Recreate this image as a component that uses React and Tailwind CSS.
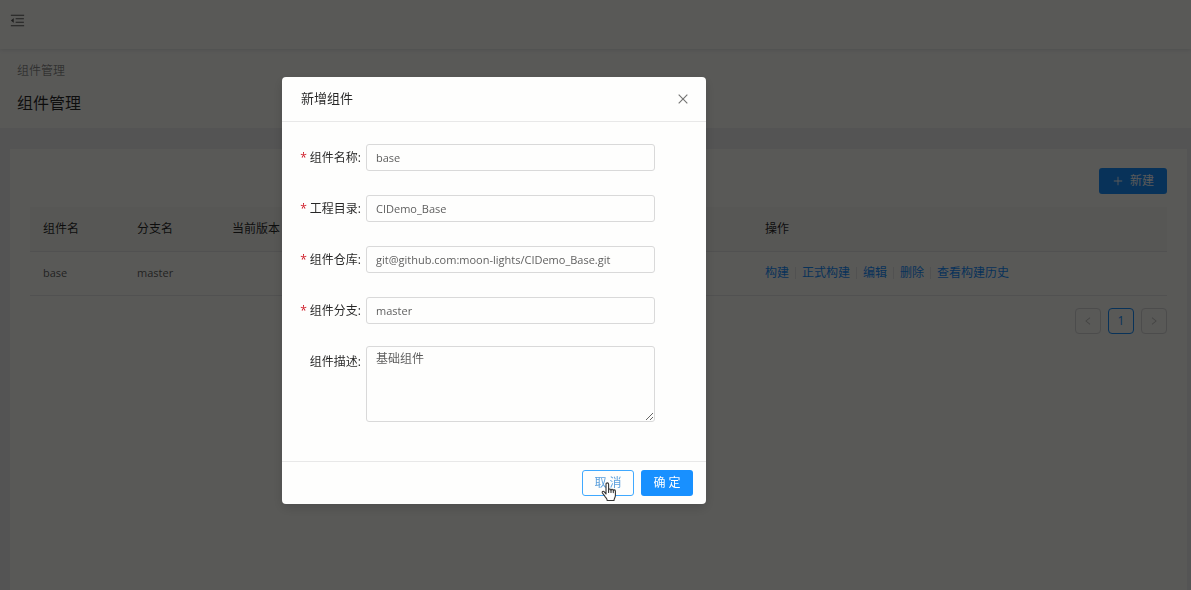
import React, { useState } from "react";
import {
  AiOutlineMenuFold,
  AiOutlineClose,
  AiOutlinePlus,
  AiOutlineLeft,
  AiOutlineRight,
} from "react-icons/ai";

const fields = [
  { name: "name", label: "组件名称" },
  { name: "dir", label: "工程目录" },
  { name: "repo", label: "组件仓库" },
  { name: "branch", label: "组件分支" },
];

const actions = ["构建", "正式构建", "编辑", "删除", "查看构建历史"];

const PageHeader = () => (
  <>
    <header className="relative flex h-[49px] items-center bg-[#fefefa] px-[9px] shadow-[0_1px_4px_rgba(0,21,41,0.12)]">
      <button type="button" aria-label="收起菜单" className="pb-2 text-[17px] text-black/65">
        <AiOutlineMenuFold />
      </button>
    </header>
    <div className="bg-[#fefefa] px-[17px] pt-3 pb-[11px]">
      <nav className="leading-5 text-black/45">组件管理</nav>
      <h1 className="mt-2 text-base leading-7 text-black/85">组件管理</h1>
    </div>
  </>
);

const ComponentTable = () => (
  <table className="mt-[13px] w-full table-fixed border-collapse text-left">
    <thead>
      <tr className="h-11 border-b border-[#e8e8e8] bg-[#f8f8f4] text-black/85">
        <th className="w-[94px] px-[13px] font-normal">组件名</th>
        <th className="w-[95px] px-[13px] font-normal">分支名</th>
        <th className="px-[13px] font-normal">当前版本</th>
        <th className="w-[415px] px-[13px] font-normal">操作</th>
      </tr>
    </thead>
    <tbody>
      <tr className="h-11 border-b border-[#e8e8e8]">
        <td className="px-[13px] text-[11px]">base</td>
        <td className="px-[13px] text-[11px]">master</td>
        <td className="px-[13px]"></td>
        <td className="px-[13px]">
          <div className="flex items-center divide-x divide-[#e8e8e8] leading-3">
            {actions.map((action) => (
              <a key={action} href="#" className="px-1.5 text-[#1890ff] first:pl-0">
                {action}
              </a>
            ))}
          </div>
        </td>
      </tr>
    </tbody>
  </table>
);

const Pagination = () => (
  <div className="mt-3 flex justify-end gap-[7px]">
    <button type="button" aria-label="上一页" disabled className="flex size-[26px] items-center justify-center rounded border border-[#d9d9d9] text-[10px] text-black/25">
      <AiOutlineLeft />
    </button>
    <button type="button" className="size-[26px] rounded border border-[#1890ff] text-[#1890ff]">1</button>
    <button type="button" aria-label="下一页" disabled className="flex size-[26px] items-center justify-center rounded border border-[#d9d9d9] text-[10px] text-black/25">
      <AiOutlineRight />
    </button>
  </div>
);

const HandCursor = () => (
  <svg viewBox="0 0 16 20" className="pointer-events-none absolute top-[11px] left-[18px] h-5 w-4" fill="#fff" stroke="#333" strokeWidth="1.1" strokeLinejoin="round" strokeLinecap="round">
    <path d="M5 12V2.2C5 .4 7.6.4 7.6 2.2V8c0-1.4 2.4-1.4 2.4.2 0-1.3 2.3-1.2 2.3.4 0-1.2 2.1-1 2.1.6v4.3c0 2-1.4 3-1.4 5H6.2c0-1.8-1.4-2.6-2.4-4.3L1.4 11c-.8-1.4.8-2.4 1.9-1.2z" />
    <path d="M7.6 8v2.5M10 8.2v2.3M12.3 8.6v2" fill="none" />
  </svg>
);

const ComponentModal = () => {
  const [values, setValues] = useState({
    name: "base",
    dir: "CIDemo_Base",
    repo: "git@github.com:moon-lights/CIDemo_Base.git",
    branch: "master",
    desc: "基础组件",
  });

  const onChange = (e) => {
    setValues({ ...values, [e.target.name]: e.target.value });
  };

  return (
    <div className="fixed inset-0 flex items-start justify-center bg-black/65 pt-[77px] pr-[203px]">
      <form
        role="dialog"
        aria-labelledby="modal-title"
        onSubmit={(e) => e.preventDefault()}
        className="w-[424px] rounded bg-[#fefefd] shadow-[0_4px_12px_rgba(0,0,0,0.15)]"
      >
        <div className="flex h-[45px] items-center justify-between border-b border-[#e8e8e8] pr-4 pl-[19px]">
          <h2 id="modal-title" className="text-[13px] text-black/85">新增组件</h2>
          <button type="button" aria-label="关闭" className="text-sm text-black/55">
            <AiOutlineClose />
          </button>
        </div>

        <div className="pt-[22px] pr-[51px] pb-[39px]">
          {fields.map((field) => (
            <div key={field.name} className="mb-6 flex items-center last-of-type:mb-0">
              <label htmlFor={field.name} className="w-[84px] shrink-0 pr-[5px] text-right text-black/85">
                <span className="mr-[3px] text-[#d0202c]">*</span>
                {field.label}:
              </label>
              <input
                type="text"
                id={field.name}
                name={field.name}
                value={values[field.name]}
                onChange={onChange}
                required
                className="h-[27px] min-w-0 flex-1 rounded-[3px] border border-[#d9d9d9] px-[9px] text-[11px] text-black/65 outline-none"
              />
            </div>
          ))}
          <div className="-mt-0.5 flex items-start">
            <label htmlFor="desc" className="w-[84px] shrink-0 pr-[5px] text-right leading-8 text-black/85">
              组件描述:
            </label>
            <textarea
              id="desc"
              name="desc"
              value={values.desc}
              onChange={onChange}
              className="h-[76px] min-w-0 flex-1 resize-y rounded-[3px] border border-[#d9d9d9] px-[9px] py-[3px] leading-[18px] outline-none"
            />
          </div>
        </div>

        <div className="flex justify-end gap-[7px] border-t border-[#e8e8e8] px-[13px] py-2">
          <button type="button" className="relative h-[26px] w-[52px] rounded-[3px] border border-[#40a9ff] text-[#5b9fdc]">
            取 消
            <HandCursor />
          </button>
          <button type="submit" className="h-[26px] w-[52px] rounded-[3px] bg-[#1890ff] text-white">确 定</button>
        </div>
      </form>
    </div>
  );
};

const App = () => {
  return (
    <div className="flex min-h-screen flex-col bg-[#f0f0f0] font-['Open_Sans','Noto_Sans_CJK_SC',sans-serif] text-xs text-black/65">
      <PageHeader />
      <main className="mt-[21px] mr-1 ml-[10px] flex-1 bg-[#fefefa] px-5 pt-[19px]">
        <div className="flex justify-end">
          <button type="button" className="flex h-[26px] items-center gap-1.5 rounded-[3px] bg-[#1890ff] px-[13px] text-white">
            <AiOutlinePlus />
            新建
          </button>
        </div>
        <ComponentTable />
        <Pagination />
      </main>
      <ComponentModal />
    </div>
  );
};

export default App;
